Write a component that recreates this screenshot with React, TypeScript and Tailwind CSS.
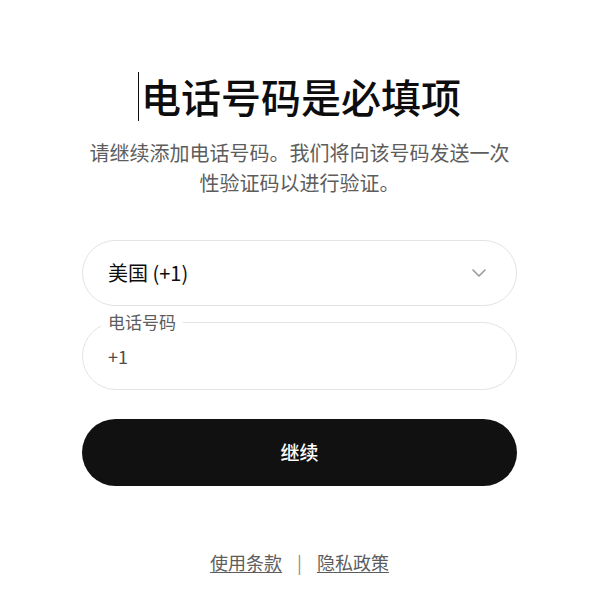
import React from "react";

export default function App() {
  const font = { fontFamily: '"Noto Sans CJK SC", "Noto Sans", sans-serif' };
  return (
    <div className="min-h-[598px] w-full bg-white" style={font}>
      <div className="ml-[82px] flex w-[435px] flex-col items-center pt-[72px]">
        <h1 className="flex items-center text-[40px] font-medium leading-[49px] text-[#0d0d0d]">
          <span className="mr-[2px] h-[49px] w-[1px] bg-[#0d0d0d]" />
          电话号码是必填项
        </h1>
        <p className="mt-[17px] text-center text-[20px] leading-[30px] text-[#5d5d5d]">
          请继续添加电话号码。我们将向该号码发送一次性验证码以进行验证。
        </p>

        <div className="mt-[42px] flex h-[66px] w-full items-center justify-between rounded-full border border-[#e3e3e3] pl-[25px] pr-[30px]">
          <span className="text-[20px] text-[#0d0d0d]">美国 (+1)</span>
          <svg width="14" height="8" viewBox="0 0 14 8" fill="none">
            <path d="M1 1l6 6 6-6" stroke="#9a9a9a" strokeWidth="1.6" strokeLinecap="round" strokeLinejoin="round" />
          </svg>
        </div>

        <fieldset className="mt-[4px] h-[80px] w-full rounded-full border border-[#e3e3e3] pl-[18px] pr-[25px]">
          <legend className="px-[7px] text-[17px] leading-[24px] text-[#5d5d5d]">电话号码</legend>
          <div className="flex h-[44px] items-center pl-[7px] text-[18px] text-[#4d4d4d]">+1</div>
        </fieldset>

        <button className="mt-[29px] flex h-[67px] w-full items-center justify-center rounded-full bg-[#111111] text-[19px] font-medium text-white">
          继续
        </button>

        <div className="mt-[63px] flex items-center gap-[15px] text-[18px] text-[#5d5d5d]">
          <a className="underline underline-offset-[2px]">使用条款</a>
          <span className="text-[#8a8a8a]">|</span>
          <a className="underline underline-offset-[2px]">隐私政策</a>
        </div>
      </div>
    </div>
  );
}
